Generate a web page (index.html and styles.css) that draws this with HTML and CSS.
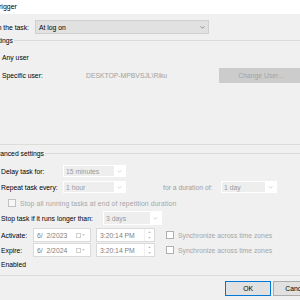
FILE: index.html
```html
<!DOCTYPE html>
<html>
<head>
<meta charset="utf-8">
<link rel="stylesheet" href="styles.css">
</head>
<body>
<div class="dialog">
  <header class="titlebar"><span class="title">Trigger</span></header>

  <div class="row r-begin">
    <span class="lbl-begin">Begin the task:</span>
    <div class="combo combo-main">
      <span class="val">At log on</span>
      <svg class="chev" viewBox="0 0 6 4"><path d="M0.5 0.5 L3 3 L5.5 0.5"/></svg>
    </div>
  </div>

  <section class="group">
    <div class="cap"><span class="cap-t cap-settings">Settings</span><span class="cap-line"></span></div>
    <div class="row r-any"><span class="radio"></span><span>Any user</span></div>
    <div class="row r-spec">
      <span class="radio on"></span>
      <span class="lbl-spec">Specific user:</span>
      <span class="user">DESKTOP-MPBVSJL\Riku</span>
      <button class="btn btn-change">Change User...</button>
    </div>
    <div class="group-bottom"></div>
  </section>

  <section class="group">
    <div class="cap cap-adv-wrap"><span class="cap-t cap-adv">Advanced settings</span><span class="cap-line"></span></div>

    <div class="row r-delay">
      <span class="cb"></span>
      <span class="lbl-delay">Delay task for:</span>
      <div class="combo combo-dis w-delay">
        <span class="field">15 minutes</span>
        <span class="arrow"><svg class="chev dis" viewBox="0 0 6 4"><path d="M0.5 0.5 L3 3 L5.5 0.5"/></svg></span>
      </div>
    </div>

    <div class="row r-repeat">
      <span class="cb"></span>
      <span class="lbl-delay">Repeat task every:</span>
      <div class="combo combo-dis w-delay">
        <span class="field">1 hour</span>
        <span class="arrow"><svg class="chev dis" viewBox="0 0 6 4"><path d="M0.5 0.5 L3 3 L5.5 0.5"/></svg></span>
      </div>
      <span class="lbl-dur">for a duration of:</span>
      <div class="combo combo-dis w-dur">
        <span class="field">1 day</span>
        <span class="arrow"><svg class="chev dis" viewBox="0 0 6 4"><path d="M0.5 0.5 L3 3 L5.5 0.5"/></svg></span>
      </div>
    </div>

    <div class="row r-stopall">
      <span class="cb dis"></span>
      <span class="txt-dis txt-stopall">Stop all running tasks at end of repetition duration</span>
    </div>

    <div class="row r-stoptask">
      <span class="cb"></span>
      <span class="lbl-stop">Stop task if it runs longer than:</span>
      <div class="combo combo-dis w-stop">
        <span class="field">3 days</span>
        <span class="arrow"><svg class="chev dis" viewBox="0 0 6 4"><path d="M0.5 0.5 L3 3 L5.5 0.5"/></svg></span>
      </div>
    </div>

    <div class="row r-activate">
      <span class="cb"></span>
      <span class="lbl-date">Activate:</span>
      <div class="picker date">
        <span class="pv">6/&nbsp;&nbsp;2/2023</span>
        <span class="cal"><span class="calbox"></span><svg class="mini" viewBox="0 0 4 3"><path d="M0 0 L4 0 L2 2.5 Z"/></svg></span>
      </div>
      <div class="picker time">
        <span class="pv">3:20:14 PM</span>
        <span class="spin">
          <svg class="mini" viewBox="0 0 4 3"><path d="M0 3 L4 3 L2 0.5 Z"/></svg>
          <svg class="mini" viewBox="0 0 4 3"><path d="M0 0 L4 0 L2 2.5 Z"/></svg>
        </span>
      </div>
      <span class="cb sync"></span>
      <span class="txt-dis">Synchronize across time zones</span>
    </div>

    <div class="row r-expire">
      <span class="cb"></span>
      <span class="lbl-date">Expire:</span>
      <div class="picker date">
        <span class="pv">6/&nbsp;&nbsp;2/2024</span>
        <span class="cal"><span class="calbox"></span><svg class="mini" viewBox="0 0 4 3"><path d="M0 0 L4 0 L2 2.5 Z"/></svg></span>
      </div>
      <div class="picker time">
        <span class="pv">3:20:14 PM</span>
        <span class="spin">
          <svg class="mini" viewBox="0 0 4 3"><path d="M0 3 L4 3 L2 0.5 Z"/></svg>
          <svg class="mini" viewBox="0 0 4 3"><path d="M0 0 L4 0 L2 2.5 Z"/></svg>
        </span>
      </div>
      <span class="cb sync"></span>
      <span class="txt-dis">Synchronize across time zones</span>
    </div>

    <div class="row r-enabled">
      <span class="cb on"></span>
      <span>Enabled</span>
    </div>
    <div class="group-bottom adv-bottom"></div>
  </section>

  <div class="row buttons">
    <button class="btn btn-ok">OK</button>
    <button class="btn btn-cancel">Cancel</button>
  </div>
</div>
</body>
</html>
```

FILE: styles.css
```css
* { box-sizing: border-box; }
html, body { margin: 0; padding: 0; }
body {
  width: 300px;
  height: 300px;
  overflow: hidden;
  background: #f0f0f0;
  font-family: "Liberation Sans", Arial, sans-serif;
  font-size: 6.8px;
  color: #000;
}
.dialog {
  margin-left: -20px;
  width: 340px;
  display: flex;
  flex-direction: column;
}
.titlebar {
  height: 14px;
  background: #fff;
  padding-left: 15px;
  display: flex;
  align-items: center;
}
.title { font-size: 7px; line-height: 10px; }

.row { display: flex; align-items: center; white-space: nowrap; }

.r-begin { margin-top: 6px; height: 14px; }
.lbl-begin { width: 49px; text-align: right; }
.combo { display: flex; align-items: center; height: 100%; }
.combo-main {
  margin-left: 6px;
  width: 174px;
  background: #e1e1e1;
  border: 1px solid #cfcfcf;
  padding: 0 3px 0 3px;
  justify-content: space-between;
}
.chev { width: 5px; height: 3px; display: block; }
.chev path { fill: none; stroke: #707070; stroke-width: 1; }
.chev.dis path { stroke: #c4c4c4; }

.cap { display: flex; align-items: flex-start; height: 10px; margin-top: 2px; }
.cap-t { line-height: 10px; text-align: right; }
.cap-settings { width: 33px; }
.cap-line { flex: 1; height: 1px; background: #dcdcdc; margin-top: 4px; margin-left: 1px; }
.cap-adv-wrap { margin-top: 4px; }
.cap-adv { width: 64px; }

.radio {
  width: 8px; height: 8px;
  border-radius: 50%;
  border: 1px solid #333;
  background: #fff;
  margin-right: 5px;
}
.r-any { margin-top: 6px; height: 10px; padding-left: 9px; }
.r-spec { margin-top: 6px; height: 15px; padding-left: 9px; }
.lbl-spec { width: 84px; }
.user { width: 133px; color: #a0a0a0; }
.btn {
  font: inherit;
  padding: 0;
  height: 15px;
  background: #e1e1e1;
  border: 1px solid #adadad;
  color: #000;
}
.btn-change {
  width: 84px;
  background: #cccccc;
  border-color: #cccccc;
  color: #a3a3a3;
}
.group-bottom { height: 1px; background: #dcdcdc; margin-top: 61px; }

.cb {
  width: 8px; height: 8px;
  border: 1px solid #333;
  background: #fff;
  margin-right: 5px;
  flex: none;
}
.cb.dis { border-color: #c2c2c2; background: #f7f7f7; }

.r-delay { margin-top: 6px; height: 12px; padding-left: 8px; }
.r-repeat { margin-top: 4px; height: 12px; padding-left: 8px; }
.lbl-delay { width: 62px; }
.combo-dis { background: #fff; padding: 1px; }
.field {
  flex: 1;
  height: 100%;
  background: #eeeeee;
  color: #9a9a9a;
  padding-left: 2px;
  display: flex;
  align-items: center;
}
.arrow { width: 11px; height: 100%; display: flex; justify-content: center; align-items: center; }
.w-delay { width: 63px; }
.lbl-dur { margin-left: 37px; width: 58px; color: #a0a0a0; }
.w-dur { width: 56px; }

.r-stopall { margin-top: 5px; height: 10px; padding-left: 28px; }
.r-stopall .cb { margin-right: 4px; }
.txt-dis { color: #a6a6a6; }
.txt-stopall { letter-spacing: 0.13px; }

.r-stoptask { margin-top: 3px; height: 14px; padding-left: 8px; }
.lbl-stop { width: 102px; }
.w-stop { width: 59px; }

.r-activate { margin-top: 3px; height: 14px; padding-left: 8px; }
.r-expire { margin-top: 1px; height: 14px; padding-left: 8px; }
.lbl-date { width: 32px; }
.picker {
  display: flex;
  align-items: center;
  height: 100%;
  background: #fff;
  border: 1px solid #dadada;
  color: #7f7f7f;
  padding-left: 3px;
}
.date { width: 58px; }
.time { width: 59px; margin-left: 5px; padding-left: 3px; }
.pv { flex: 1; }
.cal { display: flex; align-items: center; gap: 1px; padding-right: 5px; }
.calbox { width: 5px; height: 5px; border: 1px solid #cfcfcf; }
.mini { width: 3px; height: 2px; display: block; }
.mini path { fill: #c0c0c0; }
.spin {
  display: flex;
  flex-direction: column;
  justify-content: space-between;
  height: 100%;
  width: 10px;
  align-items: center;
  padding: 2px 0;
  border-left: 1px solid #f0f0f0;
}
.cb.sync { margin-left: 11px; margin-right: 4px; border-color: #b0b0b0; }

.r-enabled { margin-top: 2px; height: 10px; padding-left: 8px; }
.adv-bottom { margin-top: 6px; }

.buttons { margin-top: 5px; height: 15px; padding-left: 245px; }
.btn-ok { width: 48px; border-color: #0078d7; }
.btn-cancel { width: 48px; margin-left: 2px; text-align: left; padding-left: 11px; }
```
